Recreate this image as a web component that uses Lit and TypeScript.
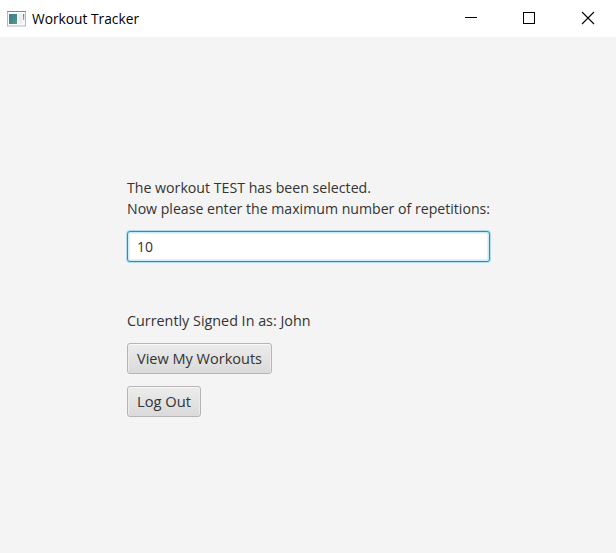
import { LitElement, html, css } from "lit";
import { customElement, property } from "lit/decorators.js";

/** A single line of text fitted to a given width. */
@customElement("fit-text")
class FitText extends LitElement {
  @property({ type: Number }) width = 0;
  @property() text = "";
  static styles = css`
    :host { display: block; color: #333; }
    svg { display: block; overflow: visible; height: 20px; }
    text { font-family: "Open Sans", "Noto Sans", sans-serif; font-size: 15.2px; fill: currentColor; }
  `;
  render() {
    return html`<svg width=${this.width} height="20"><text x="0" y="15" textLength=${this.width} lengthAdjust="spacingAndGlyphs">${this.text}</text></svg>`;
  }
}

@customElement("fx-button")
class FxButton extends LitElement {
  @property({ type: Number }) textWidth = 0;
  @property() label = "";
  static styles = css`
    :host { display: block; }
    .btn {
      display: flex; align-items: center; box-sizing: border-box; height: 31px; padding: 0 9px;
      border: 1px solid #b5b5b5; border-radius: 3px;
      background: linear-gradient(#ececec, #dadada);
      box-shadow: inset 0 1px 0 #f8f8f8, inset 1px 0 0 #ebebeb, inset -1px 0 0 #ebebeb;
      white-space: nowrap; cursor: default;
    }
  `;
  render() {
    return html`<div class="btn" role="button"><fit-text .width=${this.textWidth} .text=${this.label}></fit-text></div>`;
  }
}

@customElement("app-root")
class AppRoot extends LitElement {
  static styles = css`
    :host { display: flex; flex-direction: column; height: 100vh; background: #f4f4f4; overflow: hidden; }
    .bar { display: flex; align-items: center; height: 37px; background: #fff; flex: none; }
    .app { display: block; margin: 0 6px 0 7px; }
    .title { color: #000; }
    .controls { display: flex; margin-left: auto; }
    .control { width: 58px; height: 37px; display: block; }
    .form { display: flex; flex-direction: column; align-items: flex-start; width: 363px; margin: 141px 0 0 127px; }
    .line { height: 21px; }
    .field {
      box-sizing: border-box; width: 363px; height: 31px; margin: 11px 0 49px; padding: 5px 9px;
      background: #fff; border: 1px solid #039ed3; border-radius: 3px;
      box-shadow: 0 0 0 1px rgba(3, 158, 211, .28), inset 0 0 0 1px #cfe9f5, inset 0 0 0 2px #e4f2fa;
    }
    .gap { margin-top: 12px; }
  `;
  render() {
    return html`
      <div class="bar">
        <svg class="app" width="19" height="16" viewBox="0 0 19 16">
          <defs>
            <linearGradient id="pane" x1="0" y1="0" x2="1" y2="1"><stop offset="0" stop-color="#4878a0"/><stop offset=".5" stop-color="#44878c"/><stop offset="1" stop-color="#55a478"/></linearGradient>
            <linearGradient id="strip" x1="0" y1="0" x2="0" y2="1"><stop offset="0" stop-color="#4c7fa5"/><stop offset="1" stop-color="#79bd92"/></linearGradient>
          </defs>
          <rect x=".5" y=".5" width="18" height="14.5" fill="#fafafa" stroke="#b4b8bf"/>
          <path d="M0 .5h19" stroke="#858995"/>
          <rect x="2" y="3" width="8" height="10" fill="url(#pane)"/>
          <rect x="11.5" y="3" width="4" height="10" fill="#eceeef"/>
          <rect x="16" y="3" width="1.2" height="6" fill="url(#strip)"/>
        </svg>
        <fit-text class="title" .width=${107} .text=${"Workout Tracker"}></fit-text>
        <div class="controls">
          <svg class="control" viewBox="0 0 58 37"><path d="M23 17.5h12" stroke="#000"/></svg>
          <svg class="control" viewBox="0 0 58 37"><rect x="23.5" y="12.5" width="11" height="11" fill="none" stroke="#000"/></svg>
          <svg class="control" viewBox="0 0 58 37"><path d="M24 12l12 12M36 12L24 24" stroke="#000" stroke-width="1.1"/></svg>
        </div>
      </div>
      <div class="form">
        <fit-text class="line" .width=${244} .text=${"The workout TEST has been selected."}></fit-text>
        <fit-text class="line" .width=${363} .text=${"Now please enter the maximum number of repetitions:"}></fit-text>
        <div class="field"><fit-text .width=${16} .text=${"10"}></fit-text></div>
        <fit-text .width=${183.5} .text=${"Currently Signed In as: John"}></fit-text>
        <fx-button class="gap" .textWidth=${125} .label=${"View My Workouts"}></fx-button>
        <fx-button class="gap" .textWidth=${54} .label=${"Log Out"}></fx-button>
      </div>`;
  }
}
